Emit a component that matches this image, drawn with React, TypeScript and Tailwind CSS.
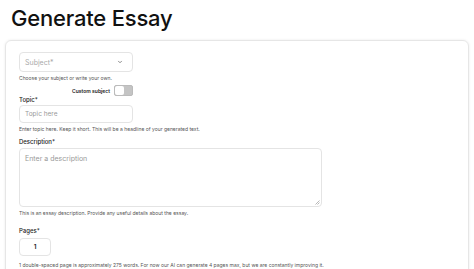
import { ChevronDown } from 'lucide-react'

function Help({ children }: { children: React.ReactNode }) {
  return <p className="mt-[2px] text-[5px] leading-[8px] text-[#555]">{children}</p>
}

function Label({ children }: { children: React.ReactNode }) {
  return <p className="text-[6px] font-medium leading-[8px] text-[#222]">{children}</p>
}

export default function App() {
  return (
    <main className="min-h-[269px] overflow-hidden bg-white font-['Inter',_sans-serif]">
      <h1 className="pl-[11px] pt-[5px] text-[22px] font-medium leading-[26px] tracking-[-0.2px] text-[#111]">
        Generate Essay
      </h1>
      <section className="mx-[5px] mt-[9px] h-[240px] rounded-t-[6px] border border-[#e6e6e6] px-[13px] pt-[11px] shadow-[0_0_3px_rgba(0,0,0,0.08)]">
        <div className="flex h-[20px] w-[114px] items-center justify-between rounded-[4px] border border-[#e4e4e4] px-[5px]">
          <span className="text-[7px] leading-[9px] text-[#aaa]">Subject*</span>
          <ChevronDown size={6} strokeWidth={3} className="mr-[4px] text-[#666]" />
        </div>
        <Help>Choose your subject or write your own.</Help>
        <div className="mt-[3px] flex h-[11px] w-[114px] items-center justify-end gap-[4px]">
          <span className="text-[5px] font-semibold leading-[8px] text-[#222]">Custom subject</span>
          <div className="flex h-[11px] w-[19px] rounded-[2px] border border-[#bbb] bg-[#c4c4c4]">
            <div className="h-full w-[9px] rounded-[2px] bg-white" />
          </div>
        </div>
        <Label>Topic*</Label>
        <div className="mt-[1px] flex h-[18px] w-[114px] items-center rounded-[4px] border border-[#e4e4e4] px-[5px]">
          <span className="text-[6.5px] leading-[9px] text-[#999]">Topic here</span>
        </div>
        <Help>Enter topic here. Keep it short. This will be a headline of your generated text.</Help>
        <div className="mt-[5px]">
          <Label>Description*</Label>
          <div className="relative mt-[2px] h-[59px] w-[303px] rounded-[4px] border border-[#e4e4e4] px-[5px] pt-[5px]">
            <p className="text-[7px] leading-[9px] text-[#999]">Enter a description</p>
            <svg width="5" height="5" viewBox="0 0 5 5" className="absolute bottom-[1px] right-[1px]">
              <path d="M4.5 0.5 L0.5 4.5 M4.5 2.5 L2.5 4.5" stroke="#999" strokeWidth="0.7" />
            </svg>
          </div>
          <Help>This is an essay description. Provide any useful details about the essay.</Help>
        </div>
        <div className="mt-[10px]">
          <Label>Pages*</Label>
          <div className="mt-[3px] flex h-[18px] w-[32px] items-center justify-center rounded-[4px] border border-[#e4e4e4]">
            <span className="text-[6.5px] font-semibold leading-[9px] text-[#222]">1</span>
          </div>
          <p className="mt-[5px] text-[5px] leading-[8px] text-[#555]">
            1 double-spaced page is approximately 275 words. For now our AI can generate 4 pages max, but we are constantly improving it.
          </p>
        </div>
      </section>
    </main>
  )
}
